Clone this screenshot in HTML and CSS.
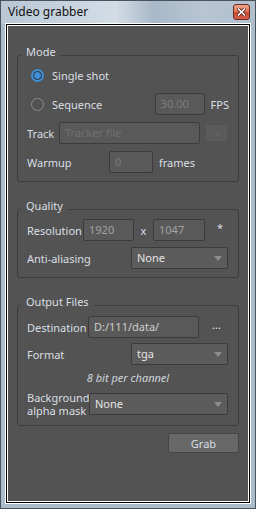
FILE: index.html
```html
<!DOCTYPE html>
<html lang="en">
<head>
    <meta charset="UTF-8">
    <title>Video grabber</title>
    <link rel="stylesheet" href="styles.css">
</head>
<body>
    <div class="window">
        <div class="titlebar">
            <span class="title">Video grabber</span>
            <span class="close-btn">
                <svg width="9" height="8" viewBox="0 0 9 8">
                    <path d="M1.5 1 L7.5 7 M7.5 1 L1.5 7" stroke="#5a2418" stroke-width="3.2" stroke-linecap="square"/>
                    <path d="M1.5 1 L7.5 7 M7.5 1 L1.5 7" stroke="#ffffff" stroke-width="1.6" stroke-linecap="square"/>
                </svg>
            </span>
        </div>

        <div class="client">
            <!-- Mode -->
            <fieldset class="group">
                <legend>Mode</legend>
                <div class="group-body mode-body">
                    <div class="row radio-row">
                        <span class="radio checked"></span>
                        <span>Single shot</span>
                    </div>
                    <div class="row radio-row">
                        <span class="radio"></span>
                        <span class="seq-label">Sequence</span>
                        <span class="field disabled fps-field">30.00</span>
                        <span class="suffix">FPS</span>
                    </div>
                    <div class="row">
                        <span class="label track-label">Track</span>
                        <span class="field placeholder track-field">Tracker file</span>
                        <span class="dots-btn disabled">...</span>
                    </div>
                    <div class="row">
                        <span class="label warmup-label">Warmup</span>
                        <span class="field disabled warmup-field">0</span>
                        <span class="suffix">frames</span>
                    </div>
                </div>
            </fieldset>

            <!-- Quality -->
            <fieldset class="group">
                <legend>Quality</legend>
                <div class="group-body quality-body">
                    <div class="row">
                        <span class="label res-label">Resolution</span>
                        <span class="field dim res-field">1920</span>
                        <span class="times">x</span>
                        <span class="field dim res-field2">1047</span>
                        <span class="star">*</span>
                    </div>
                    <div class="row">
                        <span class="label wide-label">Anti-aliasing</span>
                        <span class="combo aa-combo">None</span>
                    </div>
                </div>
            </fieldset>

            <!-- Output Files -->
            <fieldset class="group last">
                <legend>Output Files</legend>
                <div class="group-body output-body">
                    <div class="row">
                        <span class="label dest-label">Destination</span>
                        <span class="field path-field">D:/111/data/</span>
                        <span class="dots-btn flat">...</span>
                    </div>
                    <div class="row">
                        <span class="label wide-label">Format</span>
                        <span class="combo aa-combo">tga</span>
                    </div>
                    <div class="note">8 bit per channel</div>
                    <div class="row tall-row">
                        <span class="label bg-label">Background alpha mask</span>
                        <span class="combo bg-combo">None</span>
                    </div>
                </div>
            </fieldset>

            <div class="actions">
                <button class="grab-btn">Grab</button>
            </div>
        </div>
    </div>
</body>
</html>
```

FILE: styles.css
```css
:root {
    --frame: #acbbcb;
    --client-bg: #535353;
    --text: #dadfe4;
    --field-bg: #595959;
    --field-border: #3b3b3b;
    --group-border: #3c3c3c;
    --accent: #3d8fd8;
}

* {
    box-sizing: border-box;
}

body {
    margin: 0;
    width: 256px;
    height: 509px;
    font-family: "Noto Sans", sans-serif;
    font-size: 11px;
    color: var(--text);
}

.window {
    width: 256px;
    height: 509px;
    border: 1px solid #4a525c;
    background-color: var(--frame);
    padding: 0 5px 5px 5px;
    display: flex;
    flex-direction: column;
}

.titlebar {
    height: 23px;
    flex: none;
    display: flex;
    align-items: center;
    justify-content: space-between;
    margin: 0 -5px;
    padding: 0 5px 2px 7px;
    background: linear-gradient(90deg, #b9c7d5 0%, #c6d2de 25%, #d4dde6 45%, #a9b9c9 60%, #b7c5d3 80%, #b0bfce 100%);
}

.title {
    font-size: 12px;
    color: #111;
}

.close-btn {
    width: 17px;
    height: 16px;
    border: 1px solid #6e2c1e;
    border-radius: 3px;
    background: linear-gradient(180deg, #f1a48e 0%, #e0765b 45%, #c9482e 55%, #d2604a 100%);
    display: flex;
    align-items: center;
    justify-content: center;
}

.client {
    flex: 1;
    background-color: var(--client-bg);
    border: 1px solid #000;
    box-shadow: 0 0 0 1px #fff, inset 0 0 0 1px #fff;
    padding: 20px 10px 0 10px;
    display: flex;
    flex-direction: column;
}

.group {
    margin: 0 0 17px 0;
    padding: 0;
    border: 1px solid var(--group-border);
    border-radius: 3px;
    min-width: 0;
}

.group.last {
    margin-bottom: 0;
}

.group legend {
    margin-left: 3px;
    padding: 0 5px 7px 5px;
    font-size: 11px;
    line-height: 14px;
    color: var(--text);
}

.group-body {
    display: flex;
    flex-direction: column;
    padding: 0 9px;
    margin-top: -13px;
}

.mode-body {
    padding-top: 11px;
    padding-bottom: 8px;
    gap: 7px;
}

.quality-body {
    padding-top: 12px;
    padding-bottom: 8px;
    gap: 6px;
}

.output-body {
    padding-top: 13px;
    padding-bottom: 8px;
    gap: 5px;
}

.row {
    height: 22px;
    display: flex;
    align-items: center;
    white-space: nowrap;
}

.radio-row {
    padding-left: 4px;
}

.radio {
    width: 13px;
    height: 13px;
    border-radius: 50%;
    border: 1px solid #8c8c8c;
    margin-right: 8px;
    flex: none;
}

.radio.checked {
    border: 2px solid var(--accent);
    background: radial-gradient(circle, var(--accent) 0 3px, #2f4a62 3.5px, #3b3b3b 4.5px);
}

.seq-label {
    width: 103px;
}

.label {
    flex: none;
}

.track-label { width: 32px; }
.warmup-label { width: 82px; }
.res-label { width: 56px; }
.wide-label { width: 104px; }
.dest-label { width: 61px; }

.bg-label {
    width: 62px;
    white-space: normal;
    line-height: 13px;
}

.field {
    height: 22px;
    flex: none;
    background-color: var(--field-bg);
    border: 1px solid var(--field-border);
    border-radius: 2px;
    padding-left: 5px;
    line-height: 20px;
    color: #cfcfcf;
}

.field.disabled { color: #7e7e7e; }
.field.dim { color: #a3a3a3; }
.field.placeholder { color: #707070; }

.fps-field { width: 50px; }
.track-field { width: 141px; }
.warmup-field { width: 44px; }
.res-field { width: 51px; }
.res-field2 { width: 52px; }
.path-field { width: 111px; }

.suffix {
    margin-left: 6px;
}

.times {
    width: 19px;
    text-align: center;
}

.star {
    margin-left: 12px;
    margin-top: -6px;
}

.dots-btn {
    width: 21px;
    height: 16px;
    margin-left: 6px;
    text-align: center;
    line-height: 12px;
    border-radius: 2px;
}

.dots-btn.disabled {
    background-color: #5b5b5b;
    color: #6f6f6f;
}

.dots-btn.flat {
    color: #e6e6e6;
    margin-left: 7px;
}

.combo {
    height: 22px;
    flex: none;
    background-color: #5c5c5c;
    border: 1px solid var(--field-border);
    border-radius: 2px;
    padding-left: 5px;
    line-height: 20px;
    color: #e4e4e4;
    display: flex;
    justify-content: space-between;
    align-items: center;
}

.combo::after {
    content: "";
    margin-right: 5px;
    border-left: 4px solid transparent;
    border-right: 4px solid transparent;
    border-top: 5px solid #8d8d8d;
}

.aa-combo { width: 97px; }
.bg-combo { width: 139px; }

.note {
    height: 16px;
    line-height: 16px;
    text-align: center;
    font-style: italic;
    color: #cfd6dc;
}

.tall-row {
    height: 26px;
}

.actions {
    display: flex;
    justify-content: flex-end;
    margin-top: 7px;
}

.grab-btn {
    width: 71px;
    height: 20px;
    background-color: #686868;
    border: 1px solid #454545;
    border-radius: 2px;
    color: var(--text);
    font-family: inherit;
    font-size: 11px;
    padding: 0;
}
```
